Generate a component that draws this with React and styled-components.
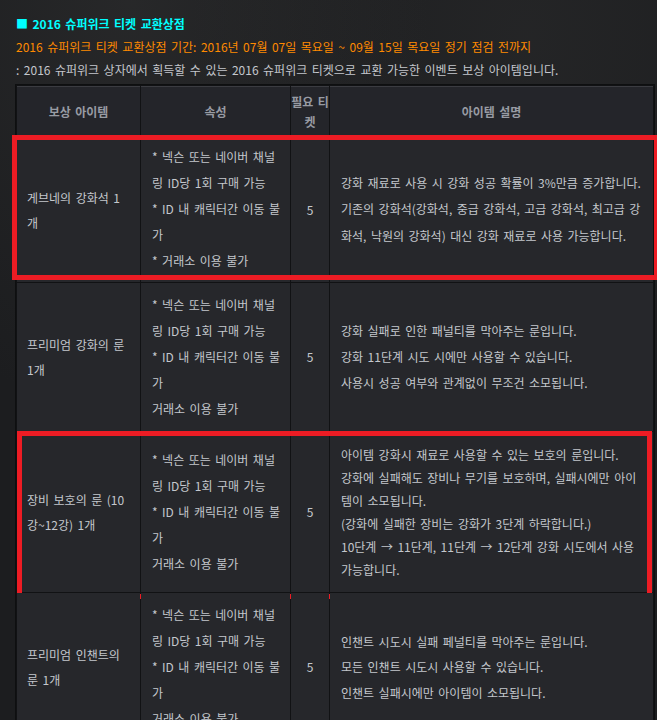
import React from "react";
import styled, { createGlobalStyle } from "styled-components";

const Global = createGlobalStyle`
  html, body { margin: 0; padding: 0; }
  body {
    background: #1e1f21;
    font-family: "Noto Sans CJK KR", "Noto Sans", sans-serif;
    font-size: 12px;
    word-spacing: 1.8px;
    color: #c4c7cd;
  }
`;

const Page = styled.div`
  min-height: 720px;
  padding: 12px 2px 0 15px;
  box-sizing: border-box;
  background:
    radial-gradient(ellipse at 20% 0%, rgba(60,60,60,0.35), transparent 40%),
    radial-gradient(ellipse at 80% 5%, rgba(55,55,55,0.3), transparent 45%),
    #1c1d1f;
`;

const Intro = styled.div`
  padding-left: 1px;
  line-height: 23px;
  white-space: nowrap;
`;

const Title = styled.div`
  color: #00ffff;
  font-weight: 700;
  font-size: 12px;
`;

const Period = styled.div`
  color: #ff8a00;
`;

const Note = styled.div`
  color: #c4c7cd;
`;

const Table = styled.div`
  margin-top: 3px;
  background: #111214;
  border: 1px solid #0e0f10;
  padding: 1px;
  display: flex;
  flex-direction: column;
  gap: 1px;
`;

const Row = styled.div`
  position: relative;
  display: grid;
  grid-template-columns: 123px 149px 38px 1fr;
  gap: 1px;
`;

const Highlight = styled.div`
  position: absolute;
  top: ${(p) => p.$t}px;
  left: ${(p) => p.$l}px;
  right: ${(p) => p.$r}px;
  bottom: ${(p) => p.$b}px;
  border: 5px solid #ed1c24;
  pointer-events: none;
`;

const Cell = styled.div`
  background: #26272b;
  display: flex;
  flex-direction: column;
  justify-content: center;
  align-items: ${(p) => (p.$center ? "center" : "flex-start")};
  padding: ${(p) => p.$pad || "8px 11px"};
  line-height: ${(p) => p.$lh || 26}px;
  color: #c4c7cd;
  white-space: nowrap;
`;

const HeadCell = styled.div`
  background: #24252a;
  border-top: 1px solid #3b3c41;
  display: flex;
  flex-direction: column;
  justify-content: center;
  align-items: center;
  height: 49px;
  line-height: 20px;
  font-weight: 700;
  color: #989ba3;
  white-space: nowrap;
`;

const Line = styled.div``;

const Lines = ({ lines }) => lines.map((l, i) => <Line key={i}>{l}</Line>);

const attr5 = [
  "* 넥슨 또는 네이버 채널",
  "링 ID당 1회 구매 가능",
  "* ID 내 캐릭터간 이동 불",
  "가",
];

const rows = [
  {
    name: ["게브네의 강화석 1", "개"],
    attr: [...attr5, "* 거래소 이용 불가"],
    attrPad: "7px 11px 8px",
    desc: [
      "강화 재료로 사용 시 강화 성공 확률이 3%만큼 증가합니다.",
      "기존의 강화석(강화석, 중급 강화석, 고급 강화석, 최고급 강",
      "화석, 낙원의 강화석) 대신 강화 재료로 사용 가능합니다.",
    ],
    hl: { t: -2, l: -5, r: -6, b: 2 },
    descLh: 26.5,
  },
  {
    name: ["프리미엄 강화의 룬", "1개"],
    attr: [...attr5, "거래소 이용 불가"],
    attrPad: "9px 11px",
    desc: [
      "강화 실패로 인한 패널티를 막아주는 룬입니다.",
      "강화 11단계 시도 시에만 사용할 수 있습니다.",
      "사용시 성공 여부와 관계없이 무조건 소모됩니다.",
    ],
    descLh: 26,
  },
  {
    name: ["장비 보호의 룬 (10", "강~12강) 1개"],
    attr: [...attr5, "거래소 이용 불가"],
    attrPad: "9px 11px",
    desc: [
      "아이템 강화시 재료로 사용할 수 있는 보호의 룬입니다.",
      "강화에 실패해도 장비나 무기를 보호하며, 실패시에만 아이",
      "템이 소모됩니다.",
      "(강화에 실패한 장비는 강화가 3단계 하락합니다.)",
      "10단계 → 11단계, 11단계 → 12단계 강화 시도에서 사용",
      "가능합니다.",
    ],
    hl: { t: -1, l: 0, r: 1, b: -7 },
    descLh: 23,
    descPad: "11px 11px",
  },
  {
    name: ["프리미엄 인챈트의", "룬 1개"],
    attr: [...attr5, "거래소 이용 불가"],
    attrPad: "9px 11px",
    desc: [
      "인챈트 시도시 실패 페널티를 막아주는 룬입니다.",
      "모든 인챈트 시도시 사용할 수 있습니다.",
      "인챈트 실패시에만 아이템이 소모됩니다.",
    ],
    descLh: 25.5,
  },
];

export default function App() {
  return (
    <>
      <Global />
      <Page>
        <Intro>
          <Title>■ 2016 슈퍼위크 티켓 교환상점</Title>
          <Period>
            2016 슈퍼위크 티켓 교환상점 기간: 2016년 07월 07일 목요일 ~ 09월 15일 목요일 정기 점검 전까지
          </Period>
          <Note>: 2016 슈퍼위크 상자에서 획득할 수 있는 2016 슈퍼위크 티켓으로 교환 가능한 이벤트 보상 아이템입니다.</Note>
        </Intro>
        <Table>
          <Row>
            <HeadCell>보상 아이템</HeadCell>
            <HeadCell>속성</HeadCell>
            <HeadCell>
              <Line>필요 티</Line>
              <Line>켓</Line>
            </HeadCell>
            <HeadCell>아이템 설명</HeadCell>
          </Row>
          {rows.map((r, i) => (
            <Row key={i}>
              <Cell $pad="8px 10px" $lh={25}>
                <Lines lines={r.name} />
              </Cell>
              <Cell $pad={r.attrPad} $lh={26}>
                <Lines lines={r.attr} />
              </Cell>
              <Cell $center $pad="8px 0">5</Cell>
              <Cell $pad={r.descPad || "8px 11px"} $lh={r.descLh}>
                <Lines lines={r.desc} />
              </Cell>
              {r.hl && <Highlight $t={r.hl.t} $l={r.hl.l} $r={r.hl.r} $b={r.hl.b} />}
            </Row>
          ))}
        </Table>
      </Page>
    </>
  );
}
